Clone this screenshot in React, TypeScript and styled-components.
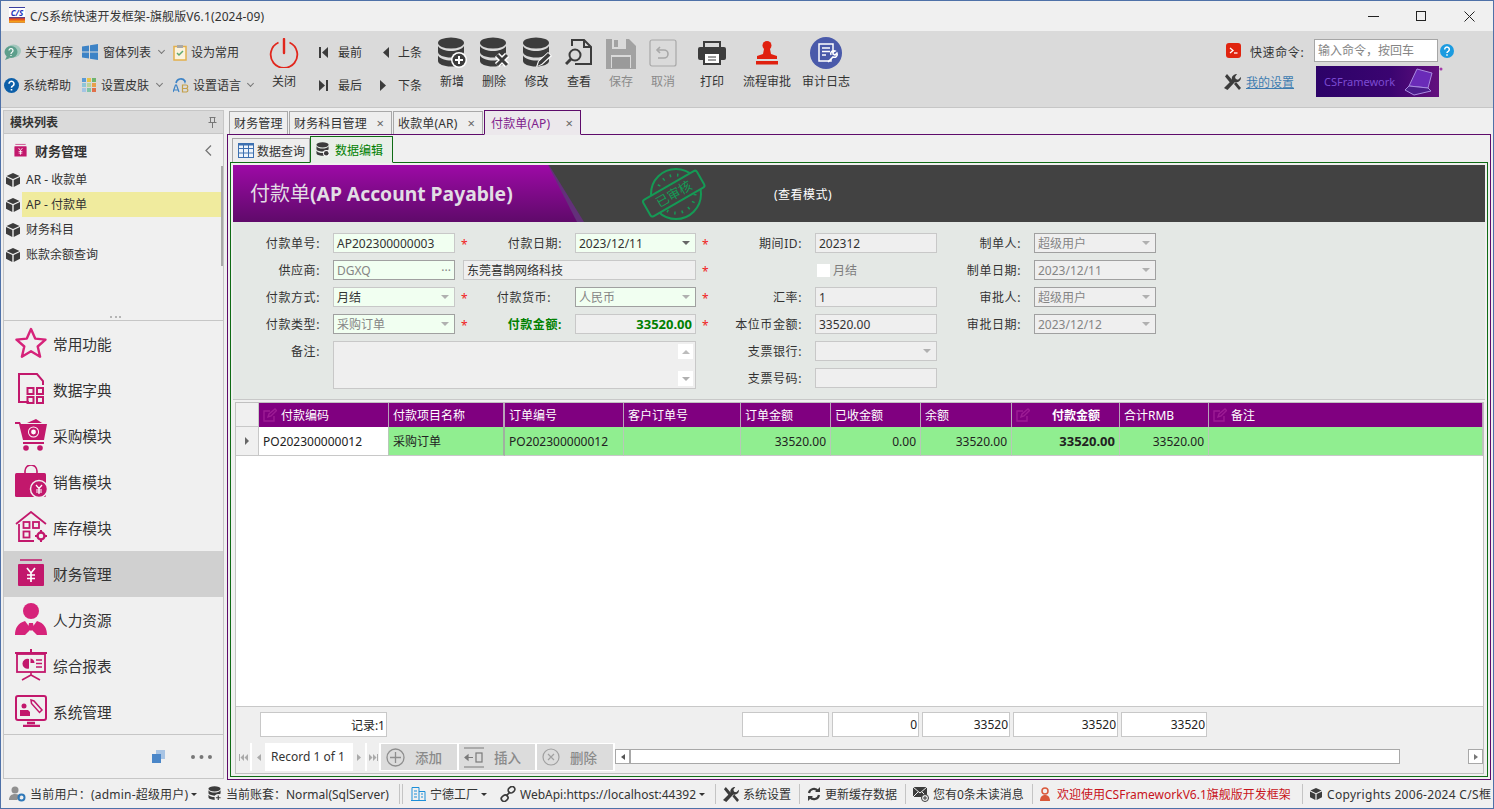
import React from 'react'
import styled, { createGlobalStyle } from 'styled-components'

const GlobalStyle = createGlobalStyle`
  html, body {
    margin: 0;
    padding: 0;
    background: #f0f0f0;
  }
  * {
    box-sizing: border-box;
  }
  svg {
    flex: none;
  }
`

const FONT = `"Noto Sans", "Noto Sans CJK SC", sans-serif`
const PINK = '#c2186c'
const DARK = '#3c3c3c'
const GRID_COLUMNS = '23px 130px 116px 119px 117px 90px 90px 91px 108px 89px 1fr'

const Window = styled.div`
  width: 1494px;
  height: 809px;
  display: flex;
  flex-direction: column;
  overflow: hidden;
  background: #f0f0f0;
  border: 1px solid #4f71a8;
  font-family: ${FONT};
  font-size: 12px;
  color: #333;
`

/* title bar */
const TitleBar = styled.div`
  height: 30px;
  flex: none;
  display: flex;
  align-items: center;
  padding-left: 8px;
`
const LogoBox = styled.div`
  width: 16px;
  height: 16px;
  margin-top: -2px;
  background: linear-gradient(#fff 0 9px, #3b3f9f 9px, #e8431a 11px, #f5b21a 14px, #8a1f9c 16px);
  border-top: 1px solid #3b3f9f;
  color: #2232b8;
  font-size: 8px;
  font-weight: 700;
  font-style: italic;
  line-height: 9px;
  text-align: center;
  overflow: hidden;
`
const TitleText = styled.div`
  margin-left: 5px;
  letter-spacing: 0.12px;
`
const WinButtons = styled.div`
  margin-left: auto;
  display: flex;
  align-items: center;
`
const WinButton = styled.div`
  width: 48px;
  height: 30px;
  display: flex;
  align-items: center;
  justify-content: center;
`

/* ribbon */
const Ribbon = styled.div`
  height: 77px;
  flex: none;
  display: flex;
  background: #dadada;
  border-bottom: 1px solid #c6c6c6;
  padding: 5px 0 0 3px;
`
const SmallColumn = styled.div<{ $w: number }>`
  width: ${(p) => p.$w}px;
  flex: none;
  display: flex;
  flex-direction: column;
  gap: 9px;
  padding-top: 4px;
`
const SmallButton = styled.div<{ $pad?: number; $gap?: number }>`
  height: 24px;
  display: flex;
  align-items: center;
  gap: ${(p) => p.$gap ?? 4}px;
  padding-left: ${(p) => p.$pad ?? 0}px;
  white-space: nowrap;
`
const ChevronMark = styled.span`
  width: 5px;
  height: 5px;
  margin: -3px 0 0 3px;
  border-right: 1px solid #777;
  border-bottom: 1px solid #777;
  transform: rotate(45deg);
`
const LargeButton = styled.div<{ $w: number; $off?: boolean }>`
  width: ${(p) => p.$w}px;
  flex: none;
  display: flex;
  flex-direction: column;
  align-items: center;
  color: ${(p) => (p.$off ? '#8a8a8a' : '#333')};
  white-space: nowrap;
`
const LargeIcon = styled.div`
  height: 34px;
  margin-bottom: 2px;
  display: flex;
  align-items: center;
  justify-content: center;
`
const RibbonRight = styled.div`
  margin-left: auto;
  width: 240px;
  margin-right: 29px;
  padding-top: 3px;
  display: flex;
  flex-direction: column;
  gap: 4px;
`
const RightRow = styled.div`
  display: flex;
  align-items: center;
`
const CommandSlot = styled.div`
  margin-left: 2px;
  display: flex;
`
const RightLabel = styled.div`
  width: 65px;
  margin: 2px 0 0 9px;
  letter-spacing: 0.6px;
`
const CommandInput = styled.div`
  width: 124px;
  height: 23px;
  margin-right: 2px;
  margin-left: -1px;
  background: #fff;
  border: 1px solid #a6a6a6;
  padding-left: 3px;
  line-height: 21px;
  color: #858585;
`
const SettingsLink = styled.a`
  width: 70px;
  margin-left: 5px;
  color: #3d7cb0;
  text-decoration: underline;
`
const Banner = styled.div`
  width: 123px;
  height: 31px;
  display: flex;
  align-items: center;
  justify-content: space-between;
  padding: 0 0 0 8px;
  background: linear-gradient(90deg, #2c0268, #3a0470 60%, #63107e);
  color: #7c4bd2;
  font-size: 11px;
`

/* main split */
const Main = styled.div`
  flex: 1;
  min-height: 0;
  display: flex;
  padding-top: 2px;
`
const LeftPanel = styled.div`
  width: 221px;
  height: 669px;
  margin-left: 2px;
  flex: none;
  display: flex;
  flex-direction: column;
  border: 1px solid #c6c6c6;
`
const PanelHeader = styled.div`
  height: 23px;
  flex: none;
  display: flex;
  align-items: center;
  justify-content: space-between;
  padding: 0 6px;
  background: #dadada;
  border-bottom: 1px solid #c6c6c6;
  font-weight: 700;
`
const TreeArea = styled.div`
  height: 187px;
  flex: none;
  position: relative;
  border-bottom: 1px solid #c6c6c6;
`
const TreeTitle = styled.div`
  height: 33px;
  display: flex;
  align-items: center;
  padding: 0 11px 0 9px;
  gap: 7px;
  font-size: 13px;
  font-weight: 700;
`
const TreeTitleText = styled.span`
  flex: 1;
`
const TreeRow = styled.div`
  height: 25px;
  display: flex;
  align-items: center;
  padding-left: 2px;
`
const TreeLabel = styled.div<{ $active?: boolean }>`
  flex: 1;
  height: 25px;
  line-height: 25px;
  margin: 0 2px 0 2px;
  padding-left: 4px;
  background: ${(p) => (p.$active ? '#f0eb9e' : 'transparent')};
`
const TreeScroll = styled.div`
  position: absolute;
  right: 0;
  top: 32px;
  width: 2px;
  height: 100px;
  background: #a9a9a9;
`
const SplitDots = styled.div`
  position: absolute;
  left: 106px;
  bottom: 2px;
  width: 11px;
  border-top: 2px dotted #b5b5b5;
`
const NavList = styled.div`
  height: 414px;
  flex: none;
  border-bottom: 1px solid #c6c6c6;
`
const NavItem = styled.div<{ $active?: boolean }>`
  height: 46px;
  display: flex;
  align-items: center;
  gap: 6px;
  padding: 0 0 2px 11px;
  font-size: 14.67px;
  background: ${(p) => (p.$active ? '#d0d0d0' : 'transparent')};
`
const PanelFooter = styled.div`
  flex: 1;
  display: flex;
  align-items: center;
  justify-content: flex-end;
  gap: 26px;
  padding: 0 11px 0 0;
`
const DotsMark = styled.div`
  width: 21px;
  border-top: 4px dotted #777;
`

/* tabs */
const RightPane = styled.div`
  flex: 1;
  min-width: 0;
  margin: 0 2px 0 3px;
  display: flex;
  flex-direction: column;
  height: 670px;
`
const TabStrip = styled.div`
  height: 24px;
  flex: none;
  display: flex;
  padding-left: 2px;
  align-items: flex-end;
`
const Tab = styled.div<{ $w: number; $active?: boolean }>`
  width: ${(p) => p.$w}px;
  height: ${(p) => (p.$active ? 25 : 23)}px;
  display: flex;
  align-items: center;
  justify-content: space-between;
  padding: 0 7px 0 ${(p) => (p.$active ? 6 : 4)}px;
  margin-right: 1px;
  position: relative;
  white-space: nowrap;
  letter-spacing: 0.15px;
  background: ${(p) => (p.$active ? '#ece8ec' : '#eeeeee')};
  border: 1px solid ${(p) => (p.$active ? '#5e0b6b' : '#a8a8a8')};
  border-bottom: ${(p) => (p.$active ? '1px solid #ece8ec' : 'none')};
  color: ${(p) => (p.$active ? '#80208c' : '#333')};
  margin-bottom: ${(p) => (p.$active ? -1 : 0)}px;
  z-index: ${(p) => (p.$active ? 1 : 0)};
`
const CloseMark = styled.span`
  color: #666;
  font-size: 13px;
  line-height: 12px;
`
const TabBody = styled.div`
  flex: 1;
  min-height: 0;
  display: flex;
  flex-direction: column;
  border: 1px solid #5e0b6b;
  padding: 2px;
`
const InnerTabs = styled.div`
  height: 25px;
  flex: none;
  display: flex;
  align-items: flex-end;
  padding-left: 2px;
`
const InnerTab = styled.div<{ $w: number; $active?: boolean }>`
  width: ${(p) => p.$w}px;
  height: ${(p) => (p.$active ? 27 : 24)}px;
  display: flex;
  align-items: center;
  gap: ${(p) => (p.$active ? 5 : 3)}px;
  padding-left: 5px;
  position: relative;
  background: ${(p) => (p.$active ? '#e8efe8' : '#eeeeee')};
  border: 1px solid ${(p) => (p.$active ? '#0f6b15' : '#a8a8a8')};
  border-bottom: ${(p) => (p.$active ? '1px solid #e8efe8' : 'none')};
  color: ${(p) => (p.$active ? '#008000' : '#333')};
  margin-bottom: ${(p) => (p.$active ? -1 : 0)}px;
  z-index: ${(p) => (p.$active ? 1 : 0)};
`
const EditBox = styled.div`
  flex: 1;
  min-height: 0;
  display: flex;
  flex-direction: column;
  border: 1px solid #0f6b15;
  padding: 2px;
`

/* header band */
const Band = styled.div`
  height: 57px;
  flex: none;
  position: relative;
  display: flex;
  align-items: center;
  padding-left: 17px;
  background: #424242;
  overflow: hidden;
  &::before {
    content: '';
    position: absolute;
    inset: 0 auto 0 0;
    width: 351px;
    background: #63307a;
    clip-path: polygon(0 0, 316px 0, 351px 100%, 0 100%);
  }
  &::after {
    content: '';
    position: absolute;
    inset: 0 auto 0 0;
    width: 344px;
    background: linear-gradient(#9d0aa6, #5f0a6a);
    clip-path: polygon(0 0, 315px 0, 344px 100%, 0 100%);
  }
`
const BandTitle = styled.div`
  width: 390px;
  margin-bottom: 2px;
  position: relative;
  z-index: 1;
  color: #e2dde4;
  font-size: 19.3px;
  font-weight: 700;
  white-space: nowrap;
`
const BandTitleCjk = styled.span`
  font-weight: 400;
  font-size: 20px;
`
const BandStamp = styled.div`
  position: relative;
  z-index: 1;
  display: flex;
`
const BandMode = styled.div`
  margin-left: 66px;
  position: relative;
  z-index: 1;
  color: #fff;
  letter-spacing: 0.5px;
`

/* form */
const FormArea = styled.div`
  height: 178px;
  flex: none;
  display: grid;
  grid-template-columns: 100px 122px 120px 121px 119px 122px 97px 122px;
  grid-auto-rows: 20px;
  row-gap: 7px;
  padding-top: 11px;
  background: #e4e8e5;
  border-bottom: 1px solid #c8c8c8;
`
const Label = styled.div<{ $green?: boolean; $inset?: number; $col?: number }>`
  display: flex;
  align-items: center;
  justify-content: flex-end;
  position: relative;
  padding-right: ${(p) => p.$inset ?? 13}px;
  white-space: nowrap;
  letter-spacing: 0.6px;
  font-weight: ${(p) => (p.$green ? 700 : 400)};
  color: ${(p) => (p.$green ? '#008000' : '#333')};
  grid-column: ${(p) => p.$col ?? 'auto'};
`
const Star = styled.span`
  position: absolute;
  left: 6px;
  top: 3px;
  color: #f01c1c;
  font-size: 12px;
  font-weight: 400;
`
const Field = styled.div<{ $bg?: string; $line?: string; $fg?: string; $right?: boolean; $span?: string; $inset?: number; $tall?: boolean }>`
  display: flex;
  align-items: center;
  justify-content: ${(p) => (p.$right ? 'flex-end' : 'space-between')};
  background: ${(p) => p.$bg ?? '#efefef'};
  border: 1px solid ${(p) => p.$line ?? '#c8c8c8'};
  color: ${(p) => p.$fg ?? '#333'};
  padding: 0 3px;
  margin-left: ${(p) => p.$inset ?? 0}px;
  grid-column: ${(p) => p.$span ?? 'auto'};
  grid-row: ${(p) => (p.$tall ? 'span 2' : 'auto')};
  white-space: nowrap;
`
const MemoField = styled(Field)`
  align-items: stretch;
  justify-content: flex-end;
  padding: 2px;
  height: 48px;
`
const MemoScroll = styled.div`
  width: 15px;
  display: flex;
  flex-direction: column;
  justify-content: space-between;
`
const MemoButton = styled.div`
  height: 15px;
  background: #fff;
  color: #aaa;
  display: flex;
  align-items: center;
  justify-content: center;
`
const Caret = styled.span`
  width: 0;
  height: 0;
  margin-right: 2px;
  border-left: 4px solid transparent;
  border-right: 4px solid transparent;
  border-top: 4px solid ${(p) => p.color ?? '#b0b0b0'};
`
const CaretUp = styled(Caret)`
  margin: 0;
  border-top: none;
  border-bottom: 4px solid #bcbcbc;
`
const CaretDown = styled(Caret)`
  margin: 0;
`
const Bold = styled.span`
  font-weight: 700;
  font-size: 13px;
`
const CheckCell = styled.div`
  display: flex;
  align-items: center;
  gap: 3px;
  padding-left: 2px;
  color: #7d7d7d;
`
const CheckBoxMark = styled.span`
  width: 13px;
  height: 13px;
  background: #fff;
`

/* data grid */
const GridBox = styled.div`
  flex: 1;
  min-height: 0;
  display: flex;
  flex-direction: column;
  margin: 2px 1px 0 2px;
  border: 1px solid #c0c0c0;
  background: #fff;
`
const GridRow = styled.div<{ $h: number }>`
  height: ${(p) => p.$h}px;
  flex: none;
  display: grid;
  grid-template-columns: ${GRID_COLUMNS};
`
const CornerCell = styled.div`
  background: #f0f0f0;
  border-right: 1px solid #c8c8c8;
  border-bottom: 1px solid #c8c8c8;
`
const HeadCell = styled.div<{ $strong?: boolean; $thick?: boolean }>`
  display: flex;
  align-items: center;
  gap: 4px;
  padding-left: 4px;
  background: #800080;
  color: #fff;
  font-weight: ${(p) => (p.$strong ? 700 : 400)};
  border-right: ${(p) => (p.$thick ? 2 : 1)}px solid #b9a2b9;
  white-space: nowrap;
  overflow: hidden;
`
const HeadLabel = styled.span`
  margin-left: 18px;
`
const IndicatorCell = styled.div`
  background: #f0f0f0;
  border-right: 1px solid #c8c8c8;
  border-bottom: 1px solid #c8c8c8;
  display: flex;
  align-items: center;
  justify-content: center;
`
const Triangle = styled.span`
  width: 0;
  height: 0;
  border-top: 4px solid transparent;
  border-bottom: 4px solid transparent;
  border-left: 4px solid #666;
`
const DataCell = styled.div<{ $white?: boolean; $right?: boolean; $bold?: boolean; $thick?: boolean }>`
  display: flex;
  align-items: center;
  justify-content: ${(p) => (p.$right ? 'flex-end' : 'flex-start')};
  padding: 0 4px;
  background: ${(p) => (p.$white ? '#fff' : '#90ee90')};
  color: #222;
  font-weight: ${(p) => (p.$bold ? 700 : 400)};
  font-size: ${(p) => (p.$bold ? 13 : 12)}px;
  border-right: ${(p) => (p.$thick ? '2px solid #a0b0a0' : '1px solid #b8c8b8')};
  border-bottom: 1px solid #c8c8c8;
  white-space: nowrap;
`
const GridBlank = styled.div`
  flex: 1;
  background: #fff;
`
const SummaryArea = styled.div`
  height: 37px;
  flex: none;
  background: #efefef;
  border-top: 1px solid #c8c8c8;
  padding-top: 5px;
`
const SummaryRow = styled.div`
  height: 25px;
  display: grid;
  grid-template-columns: ${GRID_COLUMNS};
`
const SummaryCell = styled.div<{ $col: number }>`
  grid-column: ${(p) => p.$col};
  margin: 0 2px 0 1px;
  background: #fff;
  border: 1px solid #c8c8c8;
  display: flex;
  align-items: center;
  justify-content: flex-end;
  padding-right: 1px;
  color: #222;
`
const PagerRow = styled.div`
  height: 30px;
  flex: none;
  display: flex;
  align-items: flex-start;
  background: #efefef;
  padding-left: 1px;
`
const PagerGroup = styled.div`
  height: 28px;
  display: flex;
  background: #fff;
`
const PagerButton = styled.div<{ $w: number }>`
  width: ${(p) => p.$w}px;
  margin-right: 2px;
  background: #efefef;
  display: flex;
  align-items: center;
  justify-content: center;
`
const PagerText = styled.div`
  width: 88px;
  margin-left: -2px;
  padding-left: 6px;
  line-height: 28px;
  white-space: nowrap;
`
const PagerAction = styled.div`
  width: 76px;
  height: 26px;
  margin: 1px 2px 0 0;
  background: #dcdcdc;
  display: flex;
  align-items: center;
  gap: 10px;
  padding-left: 5px;
  color: #8a8a8a;
  font-size: 13.5px;
  font-weight: 500;
`
const ScrollEnd = styled.div<{ $gap?: number }>`
  width: 15px;
  height: 15px;
  margin: 6px 0 0 ${(p) => p.$gap ?? 0}px;
  background: #fff;
  border: 1px solid #a8a8a8;
  display: flex;
  align-items: center;
  justify-content: center;
`
const ScrollTrack = styled.div`
  width: 770px;
  height: 15px;
  margin-top: 6px;
  background: #fff;
  border: 1px solid #a8a8a8;
`
const ArrowLeft = styled.span`
  width: 0;
  height: 0;
  border-top: 3px solid transparent;
  border-bottom: 3px solid transparent;
  border-right: 4px solid #555;
`
const ArrowRight = styled.span`
  width: 0;
  height: 0;
  border-top: 3px solid transparent;
  border-bottom: 3px solid transparent;
  border-left: 4px solid #777;
`

/* status bar */
const StatusBar = styled.div`
  height: 28px;
  flex: none;
  display: flex;
  align-items: center;
  padding-left: 8px;
  white-space: nowrap;
  overflow: hidden;
`
const StatusItem = styled.div<{ $w: number; $red?: boolean; $gap?: number; $spread?: number }>`
  width: ${(p) => p.$w}px;
  flex: none;
  display: flex;
  align-items: center;
  gap: ${(p) => p.$gap ?? 4}px;
  letter-spacing: ${(p) => p.$spread ?? 0}px;
  color: ${(p) => (p.$red ? '#c8141c' : '#333')};
`
const StatusCaret = styled.span`
  width: 0;
  height: 0;
  margin-left: -1px;
  border-left: 3px solid transparent;
  border-right: 3px solid transparent;
  border-top: 3px solid #333;
`
const Sep = styled.span<{ $double?: boolean }>`
  width: 1px;
  height: 20px;
  flex: none;
  margin-left: ${(p) => (p.$double ? -5 : 0)}px;
  margin-right: ${(p) => (p.$double ? 8 : 7)}px;
  background: #c4c4c4;
`

/* icons */
type IconProps = { size?: number; color?: string }

const DbStack = ({ color = DARK }: IconProps) => (
  <g fill={color}>
    <ellipse cx="14" cy="6" rx="13" ry="5.5" />
    <path d="M1 9c2 3.5 7.500 5 13 5s11-1.500 13-5v6c0 3-5.800 5.500-13 5.500S1 18 1 15z" />
    <path d="M1 18.500c2 3.500 7.500 5 13 5s11-1.500 13-5V24c0 3-5.800 5.500-13 5.500S1 27 1 24z" />
  </g>
)
const DbPlusIcon = () => (
  <svg width="30" height="32" viewBox="0 0 30 32">
    <DbStack />
    <circle cx="22" cy="23" r="8" fill="#fff" />
    <circle cx="22" cy="23" r="6.500" fill={DARK} />
    <path d="M22 19v8M18 23h8" stroke="#fff" strokeWidth="2" />
  </svg>
)
const DbCrossIcon = () => (
  <svg width="30" height="32" viewBox="0 0 30 32">
    <DbStack />
    <path d="M18 18l10 10M28 18L18 28" stroke="#fff" strokeWidth="6" />
    <path d="M18 18l10 10M28 18L18 28" stroke={DARK} strokeWidth="3" />
  </svg>
)
const DbPenIcon = () => (
  <svg width="30" height="32" viewBox="0 0 30 32">
    <DbStack />
    <path d="M14 30l2-6L26 15l4 4-10 9z" fill="#fff" />
    <path d="M15.500 29l1.500-4.500L26 16l2.500 2.500-9 8.500z" fill={DARK} />
  </svg>
)
const ViewIcon = () => (
  <svg width="28" height="30" viewBox="0 0 28 30" fill="none" stroke={DARK} strokeWidth="2">
    <path d="M7 8V2h12l7 7v17H10" />
    <path d="M19 2v7h7" />
    <circle cx="10" cy="17" r="5.500" />
    <path d="M6 21l-5 5" strokeWidth="3" />
  </svg>
)
const SaveIcon = () => (
  <svg width="30" height="31" viewBox="0 0 30 31">
    <path d="M0 1h23l7 7v23H0z" fill="#a2a2a2" />
    <path d="M6 1h14v10H6z" fill="#dadada" />
    <path d="M8 2h4v7H8z" fill="#a2a2a2" />
    <path d="M5 17h20v13H5z" fill="#dadada" />
    <path d="M6 19h18v11H6z" fill="#9a9a9a" />
  </svg>
)
const UndoIcon = () => (
  <svg width="28" height="28" viewBox="0 0 28 28" fill="none" stroke="#a8a8a8">
    <rect x="1" y="1" width="26" height="26" rx="2" strokeWidth="1.200" />
    <path d="M11 8l-3 3 3 3" strokeWidth="1.600" />
    <path d="M8 11h7a4 4 0 0 1 0 8H9" strokeWidth="1.600" />
  </svg>
)
const PrintIcon = () => (
  <svg width="28" height="24" viewBox="0 0 28 24">
    <path d="M6 7V1h16v6" fill="none" stroke={DARK} strokeWidth="2" />
    <rect x="0" y="6" width="28" height="13" rx="2" fill={DARK} />
    <rect x="6" y="12" width="16" height="11" fill="#fff" stroke={DARK} strokeWidth="2" />
    <path d="M10 16h8M10 19h8" stroke={DARK} />
  </svg>
)
const StampIcon = () => (
  <svg width="22" height="24" viewBox="0 0 22 24" fill="#e0200f">
    <circle cx="11" cy="4.500" r="4.500" />
    <path d="M8 8h6l1 5 6 2v3H1v-3l6-2z" />
    <rect x="0" y="20" width="22" height="3.500" />
  </svg>
)
const AuditIcon = () => (
  <svg width="32" height="32" viewBox="0 0 32 32" fill="none">
    <circle cx="16" cy="16" r="16" fill="#4a5aaa" />
    <path d="M21 22v2H9V7h14v9" stroke="#fff" strokeWidth="1.500" />
    <path d="M12 11h8M12 14.500h8M12 18h4" stroke="#fff" strokeWidth="1.300" />
    <path d="M18 25l5-5a3 3 0 0 0 4-4l-2 2-2-1v-2l2-1a3 3 0 0 0-4 4" stroke="#fff" strokeWidth="1.500" />
  </svg>
)
const PowerIcon = () => (
  <svg width="30" height="30" viewBox="0 0 30 30" fill="none" stroke="#e1261c">
    <path d="M9.500 4.500a13.300 13.300 0 1 0 11 0" strokeWidth="1.800" />
    <path d="M15 1v14" strokeWidth="2.400" strokeLinecap="round" />
  </svg>
)
const SkipIcon = ({ flip, bar }: { flip?: boolean; bar?: boolean }) => (
  <svg width="9" height="13" viewBox="0 0 9 13" fill={DARK}>
    <g transform={flip ? 'matrix(-1 0 0 1 9 0)' : undefined}>
      <path d="M9 1v11L3 6.500z" />
      {bar && <rect x="0" y="1" width="2" height="11" />}
    </g>
  </svg>
)
const BubbleIcon = () => (
  <svg width="17" height="16" viewBox="0 0 17 16">
    <ellipse cx="9.500" cy="7" rx="7.500" ry="6.500" fill="#a3c7bd" />
    <ellipse cx="7" cy="8" rx="6.500" ry="6" fill="#5d9f8c" />
    <path d="M3 12l-2 4 5-2z" fill="#5d9f8c" />
    <path d="M5 6.500a2 2 0 1 1 3 1.800c-.8.400-1 .8-1 1.700M7 11v1" stroke="#fff" strokeWidth="1.200" fill="none" />
  </svg>
)
const WindowsIcon = () => (
  <svg width="16" height="16" viewBox="0 0 16 16" fill="#3d83c6">
    <path d="M0 2.500l7-1V7.500H0zM8 1.200l8-1.200v7.500H8zM0 8.500h7v6l-7-1zM8 8.500h8V16l-8-1.200z" />
  </svg>
)
const ClipIcon = () => (
  <svg width="14" height="17" viewBox="0 0 14 17" fill="none">
    <rect x="1" y="2.500" width="12" height="13.500" fill="#fbf3dc" stroke="#e3b04b" strokeWidth="1.500" />
    <rect x="4" y="1" width="6" height="3" fill="#a8a8a8" />
    <path d="M4 9l2 2 4-4" stroke="#5fa86f" strokeWidth="1.500" />
  </svg>
)
const HelpIcon = ({ size = 15, color = '#0d5fa8' }: IconProps) => (
  <svg width={size} height={size} viewBox="0 0 15 15" fill="none">
    <circle cx="7.500" cy="7.500" r="7.500" fill={color} />
    <path d="M5 5.800a2.500 2.500 0 1 1 3.800 2.100c-.9.500-1.300 1-1.300 1.800M7.500 11v1.500" stroke="#fff" strokeWidth="1.600" />
  </svg>
)
const SkinIcon = () => {
  const colors = ['#5b9bd5', '#e6c24a', '#6fb56f', '#8fc5d8', '#b7d39a', '#e8a04a', '#a4c4e4', '#7fc4a8', '#e0704a']
  return (
    <svg width="14" height="14" viewBox="0 0 14 14">
      {colors.map((c, i) => (
        <rect key={c} x={(i % 3) * 5} y={Math.floor(i / 3) * 5} width="4" height="4" fill={c} />
      ))}
    </svg>
  )
}
const LangIcon = () => (
  <svg width="16" height="16" viewBox="0 0 16 16" fill="none">
    <path d="M3 6a5 5 0 0 1 9-2" stroke="#3d83c6" strokeWidth="1.600" />
    <path d="M10 2l3 2-1 3z" fill="#3d83c6" />
    <path d="M0 15l2.500-7h1L6 15M1 13h4" stroke="#3d83c6" strokeWidth="1.200" />
    <path d="M9.500 8H13a1.700 1.700 0 0 1 0 3.500H9.500zM9.500 11.500H13.500a1.800 1.800 0 0 1 0 3.500h-4z" stroke="#c4a04a" strokeWidth="1.200" />
  </svg>
)
const CommandIcon = () => (
  <svg width="15" height="15" viewBox="0 0 15 15" fill="none">
    <rect width="15" height="15" rx="3" fill="#e0240f" />
    <path d="M4 5l3 2.500L4 10" stroke="#fff" strokeWidth="1.300" />
    <path d="M8 10h3.500" stroke="#fff" strokeWidth="1.300" />
  </svg>
)
const ToolsIcon = ({ size = 17 }: IconProps) => (
  <svg width={size} height={size} viewBox="0 0 17 17" fill={DARK}>
    <path d="M1 3.500L3 1l7 8-2.500 2.500z" />
    <path d="M0 15l8-8c-1-3 1.500-6 5-6l-2 3 .8 2 2.200.7L17 4c.3 3.500-3 6-6 5l-7.500 8z" />
    <path d="M10 11l2-2 5 6-2 2z" />
  </svg>
)
const PinIcon = () => (
  <svg width="9" height="11" viewBox="0 0 9 11" fill="none" stroke="#777">
    <path d="M1.500.500h6M2.500.500v5M6.500.500v5M.500 5.500h8M4.500 5.500V11" />
  </svg>
)
const CubeIcon = ({ size = 14 }: IconProps) => (
  <svg width={size} height={size} viewBox="0 0 14 14" fill={DARK}>
    <path d="M7 0l6.500 3L7 6 .5 3z" />
    <path d="M0 4l6.300 2.900V14L0 10.800zM14 4L7.700 6.900V14l6.300-3.200z" />
  </svg>
)
const YenBoxIcon = ({ size = 32 }: IconProps) => (
  <svg width={size} height={size} viewBox="0 0 32 32" fill="none">
    <path d="M5 3h22" stroke={PINK} strokeWidth="1.500" />
    <rect x="3" y="7" width="26" height="22" rx="1" fill={PINK} />
    <path d="M12 11l4 5 4-5M16 16v9M12 18h8M12 21.500h8" stroke="#fff" strokeWidth="1.700" />
  </svg>
)
const StarIcon = () => (
  <svg width="32" height="32" viewBox="0 0 32 32" fill="none">
    <path d="M16 2l4.200 9.600 10.300 1-7.800 6.900 2.400 10.200L16 24.300l-9.100 5.400 2.400-10.200-7.800-6.900 10.300-1z" stroke="#d6237a" strokeWidth="2.400" strokeLinejoin="round" />
  </svg>
)
const DictIcon = () => (
  <svg width="32" height="32" viewBox="0 0 32 32" fill="none" stroke={PINK} strokeWidth="2">
    <path d="M14 29H4V1h18l6 7v4" />
    <rect x="12.500" y="15" width="6" height="6" />
    <rect x="22" y="15" width="6" height="6" />
    <rect x="12.500" y="24" width="6" height="6" />
    <rect x="22" y="24" width="6" height="6" />
  </svg>
)
const CartIcon = () => (
  <svg width="32" height="32" viewBox="0 0 32 32" fill={PINK}>
    <path d="M0 3h5l1 2h26l-3 16H8L4 5H0z" />
    <path d="M12 4l9-4 6 4z" />
    <rect x="8" y="23" width="21" height="2" />
    <circle cx="11" cy="29" r="2.800" />
    <circle cx="25" cy="29" r="2.800" />
    <circle cx="18.500" cy="13" r="5.500" fill="#fff" />
    <circle cx="18.500" cy="13" r="3.500" fill="none" stroke={PINK} strokeWidth="2.200" />
  </svg>
)
const BagIcon = () => (
  <svg width="32" height="32" viewBox="0 0 32 32" fill="none">
    <path d="M10 9V6a6 6 0 0 1 12 0v3" stroke={PINK} strokeWidth="1.600" />
    <rect x="0" y="8" width="31" height="24" rx="1.500" fill={PINK} />
    <circle cx="24" cy="24" r="8.500" fill={PINK} stroke="#f0f0f0" strokeWidth="1.500" />
    <path d="M21 20l3 3.500 3-3.500M24 23.500v5.500M21 25h6M21 27h6" stroke="#fff" strokeWidth="1.200" />
  </svg>
)
const HouseIcon = () => (
  <svg width="32" height="32" viewBox="0 0 32 32" fill="none" stroke={PINK} strokeWidth="1.800">
    <path d="M1 13L16 1l15 12" />
    <path d="M4 13v17h15" />
    <rect x="8.500" y="11" width="6" height="6" />
    <rect x="18" y="11" width="6" height="6" />
    <rect x="8.500" y="20.500" width="6" height="6" />
    <circle cx="26" cy="25" r="3.500" strokeWidth="2.400" />
    <path d="M26 19v2M26 29v2M20 25h2M30 25h2" strokeWidth="2" />
  </svg>
)
const PersonIcon = () => (
  <svg width="32" height="32" viewBox="0 0 32 32" fill="#d6237a">
    <circle cx="16" cy="8" r="8" />
    <path d="M0 32c0-7 3-12 10-14l6 8 6-8c7 2 10 7 10 14H22l-6-6-6 6z" />
    <path d="M14 20h4l1 5-3 3-3-3z" />
  </svg>
)
const BoardIcon = () => (
  <svg width="32" height="32" viewBox="0 0 32 32" fill="none" stroke={PINK}>
    <path d="M0 4h32M16 0v4" strokeWidth="2" />
    <rect x="2" y="5" width="28" height="18" strokeWidth="1.800" />
    <path d="M14 10a5 5 0 1 0 0 9.500v-4.500z" fill={PINK} stroke="none" />
    <path d="M15.500 9.500a5 5 0 0 1 4 4.500h-4z" fill={PINK} stroke="none" />
    <path d="M21 11h6M21 14.500h6M21 18h6" strokeWidth="1.400" />
    <path d="M16 23v3M16 26L7 31M16 26l9 5" strokeWidth="1.600" />
  </svg>
)
const MonitorIcon = () => (
  <svg width="32" height="32" viewBox="0 0 32 32" fill="none" stroke={PINK}>
    <rect x="1" y="1" width="30" height="24" rx="2" strokeWidth="2" />
    <path d="M8 31h17M12 28h8" strokeWidth="2.400" />
    <circle cx="9" cy="11" r="2.500" fill={PINK} stroke="none" />
    <path d="M5 21v-6h8l2 2v4z" fill={PINK} stroke="none" />
    <path d="M16 5l3 1 8 9-2.500 2.500-8-9z" strokeWidth="1.500" />
  </svg>
)
const TableIcon = () => (
  <svg width="16" height="15" viewBox="0 0 16 15" fill="none" stroke="#3d70b0">
    <rect x=".5" y=".5" width="15" height="14" fill="#eef4fb" />
    <path d="M0 1.500h16" strokeWidth="2" />
    <path d="M5.500 0v15M10.500 0v15M0 5.500h16M0 10h16" />
  </svg>
)
const DbSmall = ({ size = 14 }: IconProps) => (
  <svg width={size} height={size + 1} viewBox="0 0 30 32">
    <DbStack />
    <circle cx="22" cy="24" r="7" fill="#fff" />
    <circle cx="22" cy="24" r="5" fill={DARK} />
  </svg>
)
const EditMark = () => (
  <svg width="14" height="14" viewBox="0 0 14 14" fill="none" stroke="#9c1c94" strokeWidth="1.400">
    <path d="M11 8v5H1V3h6" />
    <path d="M5 9l1-3 6-5 1.500 1.500L8 8z" />
  </svg>
)
const PagerFirst = () => (
  <svg width="9" height="7" viewBox="0 0 9 7" fill="#aaa"><rect width="1" height="7" /><path d="M5 0v7L1.500 3.500zM9 0v7L5.500 3.500z" /></svg>
)
const PagerPrev = () => (
  <svg width="4" height="7" viewBox="0 0 4 7" fill="#aaa"><path d="M4 0v7L0 3.500z" /></svg>
)
const PagerNext = () => (
  <svg width="4" height="7" viewBox="0 0 4 7" fill="#aaa"><path d="M0 0v7l4-3.500z" /></svg>
)
const PagerLast = () => (
  <svg width="9" height="7" viewBox="0 0 9 7" fill="#aaa"><rect x="8" width="1" height="7" /><path d="M0 0v7l3.500-3.500zM4 0v7l3.500-3.500z" /></svg>
)
const PlusCircle = () => (
  <svg width="19" height="19" viewBox="0 0 19 19" fill="none" stroke="#8e8e8e" strokeWidth="1.300">
    <circle cx="9.500" cy="9.500" r="8.500" />
    <path d="M9.500 4v11M4 9.500h11" />
  </svg>
)
const InsertMark = () => (
  <svg width="20" height="21" viewBox="0 0 20 21" fill="none" stroke="#7a7a7a" strokeWidth="1.200">
    <path d="M0 1h20M0 20h20" />
    <rect x="12" y="6" width="6" height="9" />
    <path d="M1 10.500h8M1 10.500l3-2.500v5z" fill="#7a7a7a" />
  </svg>
)
const CrossCircle = () => (
  <svg width="18" height="18" viewBox="0 0 18 18" fill="none" stroke="#a0a0a0" strokeWidth="1.200">
    <circle cx="9" cy="9" r="8" />
    <path d="M6 6l6 6M12 6l-6 6" />
  </svg>
)
const StampSeal = () => (
  <svg width="68" height="54" viewBox="0 0 68 54" fill="none" stroke="#159a55">
    <circle cx="36" cy="27" r="25" strokeWidth="2" />
    <circle cx="36" cy="27" r="19" strokeWidth="3" strokeDasharray="1.500 6" />
    <g transform="rotate(-30 34 27)">
      <rect x="3" y="17" width="62" height="19" rx="2.500" fill="#424242" strokeWidth="2" />
      <text x="34" y="31.500" fontSize="13" fill="#159a55" stroke="none" textAnchor="middle" fontFamily={FONT}>已审核</text>
    </g>
  </svg>
)
const UsersGear = () => (
  <svg width="17" height="16" viewBox="0 0 17 16">
    <circle cx="6" cy="4" r="3.500" fill="#909090" />
    <path d="M0 14c0-4 2.500-6 6-6s5 1.500 5.500 3L8 14z" fill="#909090" />
    <circle cx="12.500" cy="11.500" r="3" fill="none" stroke="#2f78b8" strokeWidth="2" />
  </svg>
)
const DbPlusSmall = () => (
  <svg width="14" height="16" viewBox="0 0 30 34">
    <DbStack />
    <circle cx="22" cy="25" r="8" fill="#f0f0f0" />
    <path d="M22 20v10M17 25h10" stroke={DARK} strokeWidth="2.500" />
  </svg>
)
const BuildingIcon = () => (
  <svg width="15" height="14" viewBox="0 0 15 14" fill="none" stroke="#1c8fd8">
    <path d="M1 13.500V.5h7v13M8 4.500h6v9M0 13.500h15" />
    <path d="M3 4h3M3 7h3M3 10h3M10 7h2M10 10h2" />
  </svg>
)
const LinkIcon = () => (
  <svg width="16" height="16" viewBox="0 0 16 16" fill="none" stroke={DARK} strokeWidth="1.700">
    <rect x="8" y="1" width="7" height="5.500" rx="2.700" transform="rotate(-40 11.500 3.700)" />
    <rect x="1" y="9.500" width="7" height="5.500" rx="2.700" transform="rotate(-40 4.500 12)" />
    <path d="M6 10l4-4" />
  </svg>
)
const RefreshIcon = () => (
  <svg width="14" height="14" viewBox="0 0 14 14" fill="none" stroke={DARK} strokeWidth="2.200">
    <path d="M2 6a5 5 0 0 1 9-2" />
    <path d="M12 8a5 5 0 0 1-9 2" />
    <path d="M13 0v5H8zM1 14V9h5z" fill={DARK} stroke="none" />
  </svg>
)
const MailIcon = () => (
  <svg width="16" height="16" viewBox="0 0 16 16" fill="none">
    <rect x="0" y="1" width="14" height="10" fill={DARK} />
    <path d="M0 1l7 6 7-6M0 11l5-5M14 11L9 6" stroke="#f0f0f0" />
    <circle cx="12" cy="12" r="3.500" fill="#f0f0f0" stroke={DARK} />
    <path d="M12 10v4M10 12h4" stroke={DARK} />
  </svg>
)
const RedPersonIcon = () => (
  <svg width="10" height="14" viewBox="0 0 10 14">
    <circle cx="5" cy="4" r="3" fill="none" stroke="#d9583a" strokeWidth="1.500" />
    <path d="M0 14c0-4 2-6 5-6s5 2 5 6z" fill="#d9583a" />
  </svg>
)
const LaptopArt = () => (
  <svg width="50" height="31" viewBox="0 0 50 31" fill="none">
    <path d="M14 20L22 3l15 4-4 15z" fill="#6a2bb8" stroke="#a98be0" />
    <path d="M14 20l19 2 3 3-17 4-9-5z" fill="#4b1d8c" stroke="#a98be0" />
    <circle cx="46" cy="3" r="1.500" fill="#a33aa8" />
  </svg>
)

const BASE_ITEMS = [
  { label: '常用功能', icon: <StarIcon /> },
  { label: '数据字典', icon: <DictIcon /> },
  { label: '采购模块', icon: <CartIcon /> },
  { label: '销售模块', icon: <BagIcon /> },
  { label: '库存模块', icon: <HouseIcon /> },
  { label: '财务管理', icon: <YenBoxIcon />, active: true },
  { label: '人力资源', icon: <PersonIcon /> },
  { label: '综合报表', icon: <BoardIcon /> },
  { label: '系统管理', icon: <MonitorIcon /> },
]

const TREE_ITEMS = ['AR - 收款单', 'AP - 付款单', '财务科目', '账款余额查询']

const HEADERS = ['付款项目名称', '订单编号', '客户订单号', '订单金额', '已收金额', '余额']

const GREEN = '#f1fff1'
const MID = '#a0a0a0'
const GREY = '#858585'

const App: React.FC = () => {
  return (
    <Window>
      <GlobalStyle />
      <TitleBar>
        <LogoBox>C/S</LogoBox>
        <TitleText>C/S系统快速开发框架-旗舰版V6.1(2024-09)</TitleText>
        <WinButtons>
          <WinButton>
            <svg width="11" height="11" viewBox="0 0 11 11" stroke="#222"><path d="M0 5.500h11" /></svg>
          </WinButton>
          <WinButton>
            <svg width="10" height="10" viewBox="0 0 10 10" fill="none" stroke="#222"><rect x=".5" y=".5" width="9" height="9" /></svg>
          </WinButton>
          <WinButton>
            <svg width="11" height="11" viewBox="0 0 11 11" stroke="#222"><path d="M.5.5l10 10M10.500.5l-10 10" /></svg>
          </WinButton>
        </WinButtons>
      </TitleBar>

      <Ribbon>
        <SmallColumn $w={78}>
          <SmallButton><BubbleIcon />关于程序</SmallButton>
          <SmallButton><HelpIcon />系统帮助</SmallButton>
        </SmallColumn>
        <SmallColumn $w={91}>
          <SmallButton $gap={5}><WindowsIcon />窗体列表<ChevronMark /></SmallButton>
          <SmallButton $gap={5}><SkinIcon />设置皮肤<ChevronMark /></SmallButton>
        </SmallColumn>
        <SmallColumn $w={91}>
          <SmallButton><ClipIcon />设为常用</SmallButton>
          <SmallButton><LangIcon />设置语言<ChevronMark /></SmallButton>
        </SmallColumn>
        <LargeButton $w={40}>
          <LargeIcon><PowerIcon /></LargeIcon>关闭
        </LargeButton>
        <SmallColumn $w={75}>
          <SmallButton $pad={15} $gap={10}><SkipIcon bar />最前</SmallButton>
          <SmallButton $pad={15} $gap={10}><SkipIcon flip bar />最后</SmallButton>
        </SmallColumn>
        <SmallColumn $w={52}>
          <SmallButton $pad={1} $gap={9}><SkipIcon />上条</SmallButton>
          <SmallButton $pad={1} $gap={9}><SkipIcon flip />下条</SmallButton>
        </SmallColumn>
        <LargeButton $w={42}>
          <LargeIcon><DbPlusIcon /></LargeIcon>新增
        </LargeButton>
        <LargeButton $w={42}>
          <LargeIcon><DbCrossIcon /></LargeIcon>删除
        </LargeButton>
        <LargeButton $w={43}>
          <LargeIcon><DbPenIcon /></LargeIcon>修改
        </LargeButton>
        <LargeButton $w={42}>
          <LargeIcon><ViewIcon /></LargeIcon>查看
        </LargeButton>
        <LargeButton $w={42} $off>
          <LargeIcon><SaveIcon /></LargeIcon>保存
        </LargeButton>
        <LargeButton $w={42} $off>
          <LargeIcon><UndoIcon /></LargeIcon>取消
        </LargeButton>
        <LargeButton $w={3} />
        <LargeButton $w={50}>
          <LargeIcon><PrintIcon /></LargeIcon>打印
        </LargeButton>
        <LargeButton $w={60}>
          <LargeIcon><StampIcon /></LargeIcon>流程审批
        </LargeButton>
        <LargeButton $w={58}>
          <LargeIcon><AuditIcon /></LargeIcon>审计日志
        </LargeButton>
        <RibbonRight>
          <RightRow>
            <CommandSlot><CommandIcon /></CommandSlot>
            <RightLabel>快速命令:</RightLabel>
            <CommandInput>输入命令，按回车</CommandInput>
            <HelpIcon size={14} color="#1b9be0" />
          </RightRow>
          <RightRow>
            <ToolsIcon />
            <SettingsLink>我的设置</SettingsLink>
            <Banner>CSFramework<LaptopArt /></Banner>
          </RightRow>
        </RibbonRight>
      </Ribbon>

      <Main>
        <LeftPanel>
          <PanelHeader>模块列表<PinIcon /></PanelHeader>
          <TreeArea>
            <TreeTitle>
              <YenBoxIcon size={15} />
              <TreeTitleText>财务管理</TreeTitleText>
              <svg width="7" height="11" viewBox="0 0 7 11" fill="none" stroke="#777" strokeWidth="1.300"><path d="M6 .5L1 5.500l5 5" /></svg>
            </TreeTitle>
            {TREE_ITEMS.map((t, i) => (
              <TreeRow key={t}>
                <CubeIcon />
                <TreeLabel $active={i === 1}>{t}</TreeLabel>
              </TreeRow>
            ))}
            <TreeScroll />
            <SplitDots />
          </TreeArea>
          <NavList>
            {BASE_ITEMS.map((n) => (
              <NavItem key={n.label} $active={n.active}>{n.icon}{n.label}</NavItem>
            ))}
          </NavList>
          <PanelFooter>
            <svg width="13" height="13" viewBox="0 0 13 13"><rect x="4" y="0" width="9" height="9" fill="#a8c4e4" /><rect x="0" y="4" width="9" height="9" fill="#4a86c8" /></svg>
            <DotsMark />
          </PanelFooter>
        </LeftPanel>

        <RightPane>
          <TabStrip>
            <Tab $w={59}>财务管理</Tab>
            <Tab $w={103}>财务科目管理<CloseMark>×</CloseMark></Tab>
            <Tab $w={90}>收款单(AR)<CloseMark>×</CloseMark></Tab>
            <Tab $w={97} $active>付款单(AP)<CloseMark>×</CloseMark></Tab>
          </TabStrip>
          <TabBody>
            <InnerTabs>
              <InnerTab $w={78}><TableIcon />数据查询</InnerTab>
              <InnerTab $w={83} $active><DbSmall size={14} />数据编辑</InnerTab>
            </InnerTabs>
            <EditBox>
              <Band>
                <BandTitle><BandTitleCjk>付款单</BandTitleCjk>(AP Account Payable)</BandTitle>
                <BandStamp><StampSeal /></BandStamp>
                <BandMode>(查看模式)</BandMode>
              </Band>

              <FormArea>
                <Label>付款单号:</Label>
                <Field $bg={GREEN}>AP202300000003</Field>
                <Label><Star>*</Star>付款日期:</Label>
                <Field $bg={GREEN}>2023/12/11<Caret color="#666" /></Field>
                <Label><Star>*</Star>期间ID:</Label>
                <Field>202312</Field>
                <Label>制单人:</Label>
                <Field $line={MID} $fg={GREY}>超级用户<Caret /></Field>

                <Label>供应商:</Label>
                <Field $bg={GREEN} $line={MID} $fg={GREY}>DGXQ<span>···</span></Field>
                <Field $span="span 2" $inset={8}>东莞喜鹊网络科技</Field>
                <Label $inset={0}><Star>*</Star></Label>
                <CheckCell><CheckBoxMark />月结</CheckCell>
                <Label>制单日期:</Label>
                <Field $line={MID} $fg={GREY}>2023/12/11<Caret /></Field>

                <Label>付款方式:</Label>
                <Field $bg={GREEN}>月结<Caret /></Field>
                <Label $inset={24}><Star>*</Star>付款货币:</Label>
                <Field $bg={GREEN} $line={MID} $fg={GREY}>人民币<Caret /></Field>
                <Label><Star>*</Star>汇率:</Label>
                <Field>1</Field>
                <Label>审批人:</Label>
                <Field $line={MID} $fg={GREY}>超级用户<Caret /></Field>

                <Label>付款类型:</Label>
                <Field $bg={GREEN} $line={MID} $fg={GREY}>采购订单<Caret /></Field>
                <Label $green><Star>*</Star>付款金额:</Label>
                <Field $right $fg="#008000"><Bold>33520.00</Bold></Field>
                <Label><Star>*</Star>本位币金额:</Label>
                <Field>33520.00</Field>
                <Label>审批日期:</Label>
                <Field $line={MID} $fg={GREY}>2023/12/12<Caret /></Field>

                <Label>备注:</Label>
                <MemoField $span="span 3" $tall>
                  <MemoScroll>
                    <MemoButton><CaretUp /></MemoButton>
                    <MemoButton><CaretDown /></MemoButton>
                  </MemoScroll>
                </MemoField>
                <Label>支票银行:</Label>
                <Field><span /><Caret /></Field>
                <Label $col={1} />
                <Label $col={5}>支票号码:</Label>
                <Field />
              </FormArea>

              <GridBox>
                <GridRow $h={24}>
                  <CornerCell />
                  <HeadCell><EditMark />付款编码</HeadCell>
                  {HEADERS.map((h, i) => (
                    <HeadCell key={h} $thick={i === 0}>{h}</HeadCell>
                  ))}
                  <HeadCell $strong><EditMark /><HeadLabel>付款金额</HeadLabel></HeadCell>
                  <HeadCell>合计RMB</HeadCell>
                  <HeadCell><EditMark />备注</HeadCell>
                </GridRow>
                <GridRow $h={29}>
                  <IndicatorCell><Triangle /></IndicatorCell>
                  <DataCell $white>PO202300000012</DataCell>
                  <DataCell $thick>采购订单</DataCell>
                  <DataCell>PO202300000012</DataCell>
                  <DataCell />
                  <DataCell $right>33520.00</DataCell>
                  <DataCell $right>0.00</DataCell>
                  <DataCell $right>33520.00</DataCell>
                  <DataCell $right $bold>33520.00</DataCell>
                  <DataCell $right>33520.00</DataCell>
                  <DataCell />
                </GridRow>
                <GridBlank />
                <SummaryArea>
                  <SummaryRow>
                    <SummaryCell $col={2}>记录:1</SummaryCell>
                    <SummaryCell $col={6} />
                    <SummaryCell $col={7}>0</SummaryCell>
                    <SummaryCell $col={8}>33520</SummaryCell>
                    <SummaryCell $col={9}>33520</SummaryCell>
                    <SummaryCell $col={10}>33520</SummaryCell>
                  </SummaryRow>
                </SummaryArea>
                <PagerRow>
                  <PagerGroup>
                    <PagerButton $w={13}><PagerFirst /></PagerButton>
                    <PagerButton $w={13}><PagerPrev /></PagerButton>
                    <PagerText>Record 1 of 1</PagerText>
                    <PagerButton $w={12}><PagerNext /></PagerButton>
                    <PagerButton $w={12}><PagerLast /></PagerButton>
                    <PagerAction><PlusCircle />添加</PagerAction>
                    <PagerAction><InsertMark />插入</PagerAction>
                    <PagerAction><CrossCircle />删除</PagerAction>
                  </PagerGroup>
                  <ScrollEnd><ArrowLeft /></ScrollEnd>
                  <ScrollTrack />
                  <ScrollEnd $gap={68}><ArrowRight /></ScrollEnd>
                </PagerRow>
              </GridBox>
            </EditBox>
          </TabBody>
        </RightPane>
      </Main>

      <StatusBar>
        <StatusItem $w={199} $spread={0.2}><UsersGear />当前用户：(admin-超级用户)<StatusCaret /></StatusItem>
        <StatusItem $w={191}><DbPlusSmall />当前账套：Normal(SqlServer)</StatusItem>
        <Sep /><Sep $double />
        <StatusItem $w={89}><BuildingIcon />宁德工厂<StatusCaret /></StatusItem>
        <StatusItem $w={215}><LinkIcon />WebApi:https://localhost:44392<StatusCaret /></StatusItem>
        <Sep />
        <StatusItem $w={76}><ToolsIcon size={16} />系统设置</StatusItem>
        <Sep />
        <StatusItem $w={98}><RefreshIcon />更新缓存数据</StatusItem>
        <Sep />
        <StatusItem $w={119}><MailIcon />您有0条未读消息</StatusItem>
        <Sep />
        <StatusItem $w={262} $red $gap={7}><RedPersonIcon />欢迎使用CSFrameworkV6.1旗舰版开发框架</StatusItem>
        <Sep />
        <StatusItem $w={180} $spread={0.3} $gap={5}><CubeIcon size={12} />Copyrights 2006-2024 C/S框</StatusItem>
      </StatusBar>
    </Window>
  )
}

export default App
